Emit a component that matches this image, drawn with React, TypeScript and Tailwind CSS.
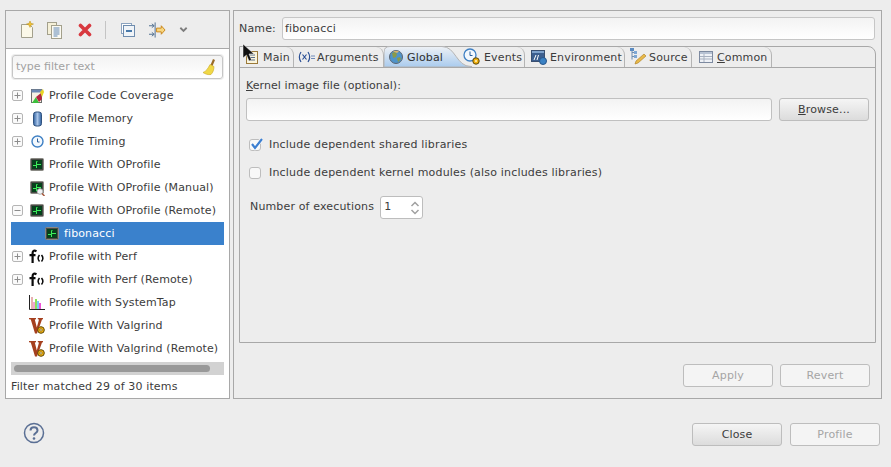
import React from "react";

const OProfileIcon = ({ lens = false }: { lens?: boolean }) => (
  <svg width="16" height="16" viewBox="0 0 16 16">
    <rect x="1.500" y="1.500" width="13" height="12" rx="1" fill="#4a4a46" stroke="#8a8a84" />
    <rect x="3" y="3" width="10" height="9" fill="#06401c" />
    <path d="M4 8.500h3.500V4.500h1M7.500 8.500v2.500M8 7.500h4" fill="none" stroke="#3cf05a" />
    {lens && (
      <>
        <circle cx="11" cy="11.500" r="2.800" fill="#eef2f5" stroke="#b0b0b0" />
        <path d="M13 13.500l2.500 2.500" stroke="#a5563a" strokeWidth="1.500" />
      </>
    )}
  </svg>
);

const PerfIcon = () => (
  <svg width="16" height="16" viewBox="0 0 16 16" fill="none" stroke="#0a0a0a">
    <path d="M7.500 2.200C5.500 1.200 3.600 1.600 3.600 4v10M0.500 6.200h6" strokeWidth="2.200" />
    <path d="M10.500 6c-1.700 2-1.700 4.500 0 6.500M12.500 6c1.700 2 1.700 4.500 0 6.500" strokeWidth="1.500" />
  </svg>
);

const ValgrindIcon = () => (
  <svg width="16" height="16" viewBox="0 0 16 16">
    <path d="M0 0h7v1.200L5.800 1.600 7.800 9.500 10 1.600 8.800 1.200V0H14v1.200l-1 .4L8 15.500H6L1.800 1.600 0 1.200z" fill="#a5401f" />
    <circle cx="12" cy="12" r="3.300" fill="#f2b10f" stroke="#5c4708" />
    <circle cx="12" cy="12" r="1.200" fill="#fff3c0" stroke="#5c4708" strokeWidth="0.600" />
  </svg>
);

const CoverageIcon = () => (
  <svg width="16" height="16" viewBox="0 0 16 16">
    <rect x="2.500" y="1.500" width="10" height="13" fill="#f6f2e4" stroke="#6d6d6d" />
    <rect x="2.500" y="1.500" width="11" height="3" fill="#6b89b5" />
    <path d="M3 15l4-6 3 6z" fill="#3cbf3c" />
    <path d="M7 9l5-4 1 6-3 3z" fill="#b5243f" />
    <path d="M11 4l3-3 1 3-2 5z" fill="#e9d324" />
  </svg>
);

const MemoryIcon = () => (
  <svg width="16" height="16" viewBox="0 0 16 16">
    <defs>
      <linearGradient id="cyl" x1="0" x2="1" y1="0" y2="0">
        <stop offset="0" stopColor="#2d5f9e" />
        <stop offset="0.500" stopColor="#a8c4e8" />
        <stop offset="1" stopColor="#2d5f9e" />
      </linearGradient>
    </defs>
    <rect x="4.500" y="1" width="8" height="14" rx="2.500" fill="url(#cyl)" stroke="#30527f" />
  </svg>
);

const TimingIcon = () => (
  <svg width="16" height="16" viewBox="0 0 16 16" fill="none">
    <circle cx="8.500" cy="7.500" r="5.500" fill="#f3f8fd" stroke="#3f80c4" strokeWidth="1.400" />
    <path d="M8.500 4.500v3.500h2" stroke="#2b5f9a" />
  </svg>
);

const TapIcon = () => (
  <svg width="16" height="16" viewBox="0 0 16 16">
    <rect x="2" y="2" width="2" height="12" fill="#e8b0b0" />
    <rect x="4" y="7" width="2" height="7" fill="#f4a3d0" />
    <rect x="6" y="4" width="2" height="10" fill="#8ee05a" />
    <rect x="8" y="6" width="2" height="8" fill="#7ecbf5" />
    <rect x="10" y="8" width="2" height="6" fill="#f054d8" />
    <path d="M0.500 0v14.500H16" fill="none" stroke="#222" />
  </svg>
);

const TreeToggle = ({ open = false }: { open?: boolean }) => (
  <svg width="11" height="11" viewBox="0 0 11 11" fill="none" stroke="#8c8c8c">
    <rect x="0.500" y="0.500" width="10" height="10" rx="1.500" fill="#fafafa" stroke="#b5b5b5" />
    <path d="M2.500 5.500h6" />
    {!open && <path d="M5.500 2.500v6" />}
  </svg>
);

const rows = [
  { label: "Profile Code Coverage", icon: <CoverageIcon />, toggle: "closed" },
  { label: "Profile Memory", icon: <MemoryIcon />, toggle: "closed" },
  { label: "Profile Timing", icon: <TimingIcon />, toggle: "closed" },
  { label: "Profile With OProfile", icon: <OProfileIcon /> },
  { label: "Profile With OProfile (Manual)", icon: <OProfileIcon lens /> },
  { label: "Profile With OProfile (Remote)", icon: <OProfileIcon />, toggle: "open" },
  { label: "fibonacci", icon: <OProfileIcon />, child: true },
  { label: "Profile with Perf", icon: <PerfIcon />, toggle: "closed" },
  { label: "Profile with Perf (Remote)", icon: <PerfIcon />, toggle: "closed" },
  { label: "Profile with SystemTap", icon: <TapIcon /> },
  { label: "Profile With Valgrind", icon: <ValgrindIcon /> },
  { label: "Profile With Valgrind (Remote)", icon: <ValgrindIcon /> },
];

const Toolbar = () => (
  <div className="flex h-[38px] items-center border-b border-[#a8a8a8] pl-[14px] pt-[1px]">
    {/* new config */}
    <svg width="16" height="18" viewBox="0 0 16 18" className="mr-[11px] shrink-0">
      <path d="M1.500 3.500h8l3 3v10h-11z" fill="#fbf8e8" stroke="#a3a08c" />
      <path d="M10 0l1 2.400 2.500.6-2.500 1-1 2.400-1-2.400-2.500-1 2.500-.6z" fill="#f2c230" stroke="#b78a10" strokeWidth="0.500" />
    </svg>
    {/* duplicate */}
    <svg width="16" height="17" viewBox="0 0 16 17" className="mr-[15px] shrink-0">
      <rect x="0.500" y="0.500" width="9" height="12" fill="#f5f0d8" stroke="#a3a08c" />
      <rect x="4.500" y="3.500" width="10" height="13" fill="#fbfaf2" stroke="#a3a08c" />
      <path d="M6.500 6h6M6.500 8h6M6.500 10h6M6.500 12h6M6.500 14h4" stroke="#5f86b5" />
    </svg>
    {/* delete */}
    <svg width="14" height="14" viewBox="0 0 14 14" className="mr-[13px] shrink-0">
      <path d="M2.500 2.500l9 9M11.500 2.500l-9 9" stroke="#d8383f" strokeWidth="3.600" strokeLinecap="round" />
    </svg>
    <div className="mr-[15px] h-[18px] w-px shrink-0 bg-[#c4c4c4]" />
    {/* collapse all */}
    <svg width="14" height="14" viewBox="0 0 14 14" className="mr-[14px] shrink-0">
      <rect x="0.500" y="0.500" width="10" height="10" fill="#fff" stroke="#8ba3bf" />
      <rect x="2.500" y="2.500" width="11" height="11" fill="#f0f4f8" stroke="#6e8cae" />
      <path d="M5 8h6" stroke="#1d5a96" strokeWidth="1.600" />
    </svg>
    {/* filter */}
    <svg width="17" height="16" viewBox="0 0 18 16" className="mr-[13px] shrink-0">
      <path d="M0 3.500h5M0 12.500h5M3 1.500l2.500 2-2.500 2M3 10.500l2.500 2-2.500 2" fill="none" stroke="#4a6a8c" />
      <path d="M6.500 0v16" stroke="#4a6a8c" />
      <path d="M8 6h5V3.500L17 8l-4 4.500V10H8z" fill="#f7d680" stroke="#c9861a" />
    </svg>
    <svg width="9" height="8" viewBox="0 0 10 8" fill="none" className="shrink-0">
      <path d="M1.500 1.500L5 5l3.500-3.500" stroke="#7d7d7d" strokeWidth="2" />
    </svg>
  </div>
);

const FilterBox = () => (
  <div className="mx-[6px] mt-[6px] flex h-[24px] items-center rounded-[3px] border border-[#c6c6c6] bg-gradient-to-b from-[#f3f3f3] to-white pl-[3px] pr-[4px] shadow-[0_0_0_1px_#ededed]">
    <span className="flex-1 tracking-normal text-[#a2a2a2]">type filter text</span>
    <svg width="16" height="18" viewBox="0 0 16 18">
      <path d="M11 1l2 1-2.500 6-2-1z" fill="#9a6b28" />
      <path d="M8 6.500l4 2c0 3-1 6-3 8-3 .5-6-.5-8-2 3-1 5-4 7-8z" fill="#f0d846" stroke="#c9a820" strokeWidth="0.600" />
    </svg>
  </div>
);

const Tree = () => (
  <div className="mx-[5px] mt-[5px] flex flex-col tracking-[0.12px]">
    {rows.map((r) => (
      <div
        key={r.label}
        className={`flex h-[23px] items-center ${r.child ? "bg-[#3a81cc] text-white" : "text-[#3c3c3c]"}`}
      >
        <span className={`flex shrink-0 pl-[1px] ${r.child ? "w-[33px]" : "w-[18px]"}`}>
          {r.toggle && <TreeToggle open={r.toggle === "open"} />}
        </span>
        <span className="mr-[4px] flex w-[16px] shrink-0">{r.icon}</span>
        <span className="whitespace-nowrap pt-[1px]">{r.label}</span>
      </div>
    ))}
  </div>
);

const Sidebar = () => (
  <aside className="flex w-[225px] flex-col border border-[#a8a8a8] bg-white">
    <div className="bg-[#ededed]">
      <Toolbar />
    </div>
    <FilterBox />
    <Tree />
    <div className="mx-[5px] mt-[2px] flex h-[13px] items-center bg-[#d2d2d2] pl-[3px]">
      <div className="h-[7px] w-[196px] rounded-full bg-[#999999]" />
    </div>
    <div className="flex flex-1 items-center pl-[5px] pt-[1px] tracking-[0.14px] text-[#3c3c3c]">
      Filter matched 29 of 30 items
    </div>
  </aside>
);

const tabIcons: Record<string, React.ReactNode> = {
  Main: (
    <svg width="16" height="16" viewBox="0 0 16 16">
      <rect x="2.500" y="2.500" width="11" height="12" fill="#fbf5dc" stroke="#9b7a3a" />
      <path d="M5 6h6M5 8.500h6M5 11h6" stroke="#5b6f8a" />
    </svg>
  ),
  Arguments: (
    <svg width="18" height="14" viewBox="0 0 18 14" fill="none" stroke="#2a4f95">
      <path d="M3 2c-2 3-2 7 0 10M10 2c2 3 2 7 0 10M4.500 4.500l4 5M8.500 4.500l-4 5" strokeWidth="1.200" />
      <path d="M13 6h4M13 8.500h4" stroke="#6f8ab8" />
    </svg>
  ),
  Events: (
    <svg width="18" height="18" viewBox="0 0 18 18">
      <circle cx="7" cy="7" r="6" fill="#f3f8fd" stroke="#3f80c4" strokeWidth="1.300" />
      <path d="M7 3.500v4h2.500" fill="none" stroke="#2b5f9a" />
      <circle cx="13" cy="13" r="3.200" fill="#f2b10f" stroke="#5c4708" />
      <circle cx="13" cy="13" r="1" fill="#fff3c0" />
    </svg>
  ),
  Environment: (
    <svg width="16" height="16" viewBox="0 0 16 16">
      <rect x="0.500" y="1.500" width="13" height="11" fill="#3d5f8f" stroke="#3a4f70" />
      <rect x="1" y="2" width="12" height="2" fill="#7fa2cc" />
      <path d="M3 11l2-5M6 11l1.500-5" stroke="#fff" />
      <circle cx="12" cy="12" r="3.500" fill="#3b82c4" stroke="#28558a" />
    </svg>
  ),
  Source: (
    <svg width="18" height="18" viewBox="0 0 18 18">
      <path d="M3 1.500v10M3 4.500h3M3 8.500h3" fill="none" stroke="#6e8cae" />
      <rect x="1" y="0" width="4" height="3" fill="#5b8bc1" />
      <rect x="5" y="3" width="3" height="3" fill="#7ea7d3" />
      <rect x="5" y="7" width="3" height="3" fill="#7ea7d3" />
      <path d="M6 16l1-3 8-7 2 2-8 7z" fill="#e8b94a" stroke="#a97a1c" strokeWidth="0.600" />
    </svg>
  ),
  Common: (
    <svg width="14" height="12" viewBox="0 0 14 12">
      <rect x="0.500" y="0.500" width="13" height="11" fill="#eef1f6" stroke="#7d8aa0" />
      <rect x="1" y="1" width="12" height="2" fill="#b7c2d3" />
      <path d="M1 5.500h12M1 8h12M5 3v8" stroke="#a7b0bf" />
    </svg>
  ),
};

const GlobeIcon = () => (
  <svg width="16" height="16" viewBox="0 0 16 16">
    <circle cx="8" cy="8" r="6.500" fill="#4f93c9" stroke="#5b6470" />
    <path d="M4 4l3-1 2 2-1 3-3 1zM9 9l3-1 1 2-3 3z" fill="#8a9a4a" />
    <path d="M5 2.500a6 6 0 0 1 6 0l-2 1.500z" fill="#d9b36a" />
  </svg>
);

const leftTabs = [
  { name: "Main", cls: "w-[54px] pl-[4px] gap-[3px]" },
  { name: "Arguments", cls: "w-[90px] pl-[4px] gap-[1px]" },
];

const rightTabs = [
  { name: "Events", cls: "w-[63px] pl-[1px] gap-[3px]" },
  { name: "Environment", cls: "w-[100px] pl-[6px] gap-[3px]" },
  { name: "Source", cls: "w-[67px] pl-[4px] gap-[2px]" },
  { name: "Common", cls: "w-[80px] pl-[7px] gap-[4px]" },
];

const PlainTab = ({ name, cls }: { name: string; cls: string }) => (
  <div
    className={`flex shrink-0 items-center whitespace-nowrap rounded-tr-[8px] border-r border-[#b4b4b4] text-[#3c3c3c] ${cls}`}
  >
    <span className="relative flex shrink-0">{tabIcons[name]}</span>
    {name === "Common" ? (
      <span className="pt-[2px]">
        <span className="underline">C</span>ommon
      </span>
    ) : (
      <span className="pt-[2px]">{name}</span>
    )}
  </div>
);

const TabStrip = () => (
  <div className="flex h-[21px] items-stretch border-b border-[#a8a8a8]">
    {leftTabs.map((t) => (
      <PlainTab key={t.name} {...t} />
    ))}
    <div className="relative flex w-[78px] shrink-0 items-center pl-[4px] text-[#2e2e2e]">
      <svg width="88" height="21" viewBox="0 0 88 21" className="absolute -top-px left-0">
        <defs>
          <linearGradient id="tabfill" x1="0" x2="0" y1="0" y2="1">
            <stop offset="0" stopColor="#eef1f5" />
            <stop offset="1" stopColor="#a9cbee" />
          </linearGradient>
        </defs>
        <path d="M0 21V6Q0 .5 6 .5H58C72 .5 72 20.500 87 20.500H88V21Z" fill="url(#tabfill)" stroke="#b4b4b4" />
      </svg>
      <span className="relative mr-[3px] flex">
        <GlobeIcon />
      </span>
      <span className="relative pt-[2px]">Global</span>
    </div>
    {rightTabs.map((t) => (
      <PlainTab key={t.name} {...t} />
    ))}
  </div>
);

const Btn = ({ children, on = false }: { children: React.ReactNode; on?: boolean }) => (
  <div
    className={`flex h-[23px] w-[90px] items-center justify-center rounded-[3px] border border-[#bdbdbd] pt-[1px] ${
      on ? "bg-gradient-to-b from-[#f5f5f5] to-[#dcdcdc] text-[#3c3c3c]" : "bg-[#f4f4f4] text-[#a5a5a5]"
    }`}
  >
    {children}
  </div>
);

const GlobalForm = () => (
  <div className="flex flex-1 flex-col px-[6px] pt-[9px]">
    <div className="h-[17px] leading-[17px] tracking-[0.07px]">
      <span className="underline">K</span>ernel image file (optional):
    </div>
    <div className="mt-[4px] flex gap-[7px]">
      <div className="h-[23px] w-[526px] rounded-[3px] border border-[#c0c0c0] bg-gradient-to-b from-[#f3f3f3] to-white" />
      <Btn on>
        <span>
          <span className="underline">B</span>rowse...
        </span>
      </Btn>
    </div>
    <label className="ml-[3px] mt-[14px] flex h-[20px] items-center gap-[8px] tracking-[0.19px]">
      <span className="relative h-[12px] w-[12px] rounded-[3px] border border-[#bdbdbd] bg-[#f8f8f8]">
        <svg width="14" height="14" viewBox="0 0 14 14" className="absolute -top-[3px] left-0">
          <path d="M2 7l3 4 7-9" fill="none" stroke="#fff" strokeWidth="3.400" />
          <path d="M2 7l3 4 7-9" fill="none" stroke="#3d7fd0" strokeWidth="2.200" />
        </svg>
      </span>
      Include dependent shared libraries
    </label>
    <label className="ml-[3px] mt-[8px] flex h-[20px] items-center gap-[8px] tracking-[0.19px]">
      <span className="h-[12px] w-[12px] rounded-[3px] border border-[#bdbdbd] bg-[#f8f8f8]" />
      Include dependent kernel modules (also includes libraries)
    </label>
    <div className="ml-[4px] mt-[13px] flex items-center gap-[6px]">
      <span>Number of executions</span>
      <div className="flex h-[23px] w-[43px] items-center justify-between rounded-[3px] border border-[#bdbdbd] bg-white pl-[3px] pr-[2px]">
        <span>1</span>
        <svg width="10" height="18" viewBox="0 0 10 18" fill="none" stroke="#a0a0a0" strokeWidth="1.500">
          <path d="M1.500 7L5 3.500 8.500 7M1.500 11L5 14.500 8.500 11" />
        </svg>
      </div>
    </div>
  </div>
);

const Details = () => (
  <main className="flex w-[649px] flex-col border border-[#a8a8a8] bg-[#ededed]">
    <div className="ml-[5px] mr-[6px] mt-[6px] flex h-[23px] items-center">
      <span className="w-[43px] pt-[1px]">Name:</span>
      <div className="flex h-[23px] flex-1 items-center rounded-[3px] border border-[#c6c6c6] bg-gradient-to-b from-[#f3f3f3] to-white pl-[2px] pt-[1px]">
        fibonacci
      </div>
    </div>
    <div className="ml-[5px] mr-[5px] mt-[6px] flex h-[297px] flex-col rounded-tr-[8px] border border-[#a8a8a8]">
      <TabStrip />
      <GlobalForm />
    </div>
    <div className="ml-auto mr-[11px] mt-[21px] flex gap-[7px]">
      <Btn>Apply</Btn>
      <Btn>Revert</Btn>
    </div>
  </main>
);

export default function App() {
  return (
    <div className="flex h-[467px] w-[891px] flex-col bg-[#ededed] font-['DejaVu_Sans',sans-serif] text-[11px] tracking-[0.15px] text-[#3c3c3c]">
      <div className="ml-[5px] mt-[10px] flex h-[389px] gap-[3px]">
        <Sidebar />
        <Details />
      </div>
      <div className="mt-[24px] flex items-start pl-[23px] pr-[11px]">
        <svg width="22" height="22" viewBox="0 0 22 22" fill="none" className="-mt-px">
          <circle cx="11" cy="11" r="9.500" stroke="#5a6f94" strokeWidth="1.500" />
          <path d="M7.500 8.500c0-4.500 7-4.500 7 0 0 2.500-3.500 2.500-3.500 5" stroke="#5a6f94" strokeWidth="2" />
          <circle cx="11" cy="16.500" r="1.300" fill="#5a6f94" />
        </svg>
        <div className="ml-auto flex gap-[8px]">
          <Btn on>Close</Btn>
          <Btn>Profile</Btn>
        </div>
      </div>
      {/* mouse pointer from the capture */}
      <svg width="13" height="20" viewBox="0 0 13 20" className="absolute left-[242px] top-[43px]">
        <path d="M1 1v14l3.500-3 2.500 6 2.500-1-2.500-6H12z" fill="#111" stroke="#fff" strokeWidth="0.500" />
      </svg>
    </div>
  );
}
